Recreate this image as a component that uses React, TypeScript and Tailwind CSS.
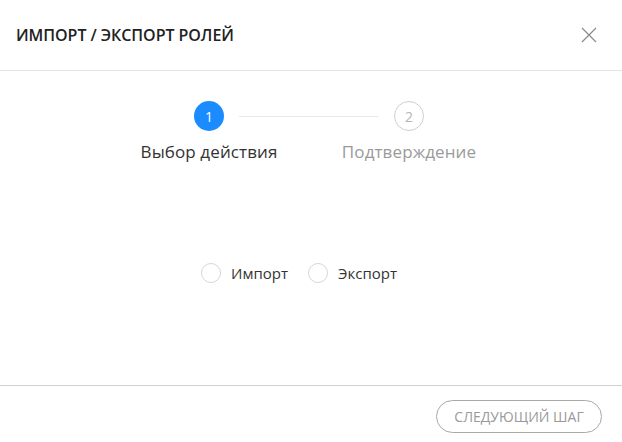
import React, { useState } from 'react';

function App() {
  const [action, setAction] = useState<'import' | 'export' | null>(null);

  return (
    <div className="w-[622px] h-[442px] bg-white flex flex-col font-['Open_Sans',sans-serif] text-[#333]">
      {/* Header */}
      <div className="h-[71px] flex items-center justify-between pl-4 pr-[25px] border-b border-[#e3e3e3]">
        <h2 className="text-[16px] font-semibold text-[#222] tracking-[-0.05px]">ИМПОРТ / ЭКСПОРТ РОЛЕЙ</h2>
        <button className="text-[#8a8a8a]">
          <svg width="16" height="16" viewBox="0 0 16 16" fill="none" stroke="currentColor" strokeWidth="1.2">
            <path d="M1 1L15 15M15 1L1 15" />
          </svg>
        </button>
      </div>

      {/* Body */}
      <div className="flex-1 flex flex-col pt-[30px] pr-[4px]">
        <div className="flex items-center justify-center">
          <div className="w-[30px] h-[30px] rounded-full bg-[#1a8cff] text-white text-[14px] flex items-center justify-center">1</div>
          <div className="w-[139px] h-px bg-[#e8e8e8] ml-[15px] mr-[16px]" />
          <div className="w-[30px] h-[30px] rounded-full border border-[#cfcfcf] text-[#b5b5b5] text-[14px] flex items-center justify-center">2</div>
        </div>
        <div className="flex justify-center mt-[8px]">
          <div className="w-[200px] text-center text-[17px] tracking-[0.1px] text-[#333]">Выбор действия</div>
          <div className="w-[200px] text-center text-[17px] tracking-[0.1px] text-[#9a9a9a]">Подтверждение</div>
        </div>

        <div className="flex justify-center items-center mt-[97px] pr-[20px] text-[15px] text-[#333]">
          <label className="flex items-center cursor-pointer mr-[20px]" onClick={() => setAction('import')}>
            <span className={`w-[20px] h-[20px] rounded-full border ${action === 'import' ? 'border-[#1a8cff]' : 'border-[#d6d6d6]'} mr-[10px]`} />
            Импорт
          </label>
          <label className="flex items-center cursor-pointer" onClick={() => setAction('export')}>
            <span className={`w-[20px] h-[20px] rounded-full border ${action === 'export' ? 'border-[#1a8cff]' : 'border-[#d6d6d6]'} mr-[10px]`} />
            Экспорт
          </label>
        </div>
      </div>

      {/* Footer */}
      <div className="h-[57px] border-t border-[#d0d0d0] flex items-start justify-end pt-[14px] pr-[20px]">
        <button className="h-[33px] w-[166px] rounded-full border border-[#a8a8a8] text-[14px] text-[#9a9a9a]">
          СЛЕДУЮЩИЙ ШАГ
        </button>
      </div>
    </div>
  );
}

export default App;
